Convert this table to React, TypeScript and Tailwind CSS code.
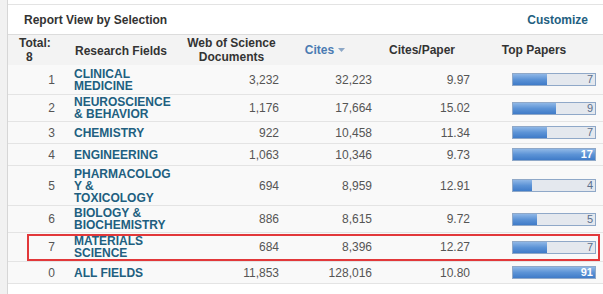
import React from 'react';

type Row = { n: number; lines: string[]; docs: string; cites: string; cpp: string; top: number; highlight?: boolean; h?: string };

const rows: Row[] = [
  { n: 1, lines: ['CLINICAL', 'MEDICINE'], docs: '3,232', cites: '32,223', cpp: '9.97', top: 7, h: 'h-[30px]' },
  { n: 2, lines: ['NEUROSCIENCE', '& BEHAVIOR'], docs: '1,176', cites: '17,664', cpp: '15.02', top: 9, h: 'h-[27px]' },
  { n: 3, lines: ['CHEMISTRY'], docs: '922', cites: '10,458', cpp: '11.34', top: 7, h: 'h-[22px]' },
  { n: 4, lines: ['ENGINEERING'], docs: '1,063', cites: '10,346', cpp: '9.73', top: 17, h: 'h-[22px]' },
  { n: 5, lines: ['PHARMACOLOG', 'Y &', 'TOXICOLOGY'], docs: '694', cites: '8,959', cpp: '12.91', top: 4, h: 'h-[40px]' },
  { n: 6, lines: ['BIOLOGY &', 'BIOCHEMISTRY'], docs: '886', cites: '8,615', cpp: '9.72', top: 5, h: 'h-[27px]' },
  { n: 7, lines: ['MATERIALS', 'SCIENCE'], docs: '684', cites: '8,396', cpp: '12.27', top: 7, highlight: true, h: 'h-[29px]' },
  { n: 0, lines: ['ALL FIELDS'], docs: '11,853', cites: '128,016', cpp: '10.80', top: 91, h: 'h-[22px]' },
];

const MAX = 17;

const Bar = ({ value }: { value: number }) => {
  const pct = Math.min(1, value / MAX) * 100;
  const full = pct >= 100;
  return (
    <div className="relative w-[84px] h-[13px] border border-[#8fa8c8] bg-[#e4e8ee]">
      <div
        className="absolute left-0 top-0 bottom-0 bg-gradient-to-b from-[#8fb7e6] via-[#5c93d6] to-[#3f7bc8]"
        style={{ width: `${pct}%` }}
      />
      <span className={`absolute right-[2px] top-0 text-[11px] leading-[11px] ${full ? 'text-white font-bold' : 'text-[#5b6f8c]'}`}>
        {value}
      </span>
    </div>
  );
};

const cols = 'grid grid-cols-[56px_120px_103px_93px_98px_1fr]';

export default function App() {
  return (
    <div className="flex w-[603px] h-[294px] bg-white text-[12px] text-[#555] overflow-hidden" style={{ fontFamily: '"Liberation Sans", Arial, sans-serif' }}>
      <div className="w-[8px] shrink-0 bg-[#f1f1f1] border-r border-[#d6d6d6]" />
      <div className="flex-1 mt-[4px] border-t border-[#e3e3e3]">
        {/* title bar */}
        <div className="h-[30px] flex items-center justify-between pl-[16px] pr-[15px] pt-[1px] border-b border-[#dcdcdc]">
          <span className="font-bold text-[#333]">Report View by Selection</span>
          <span className="font-bold text-[#23607f]">Customize</span>
        </div>

        {/* header */}
        <div className={`${cols} h-[30px] bg-[#f3f3f3] font-bold text-[#333] leading-[14px]`}>
          <div className="flex flex-col justify-center pl-[11px]">
            <span>Total:</span>
            <span className="pl-[7px]">8</span>
          </div>
          <div className="flex items-center pl-[11px] pt-[2px]">Research Fields</div>
          <div className="flex flex-col justify-center items-center pr-[8px]">
            <span>Web of Science</span>
            <span>Documents</span>
          </div>
          <div className="flex items-center justify-center pr-[17px] text-[#4a7bb2]">
            Cites
            <svg width="7" height="4" viewBox="0 0 7 4" className="ml-[4px]">
              <path d="M0 0 L7 0 L3.5 4 Z" fill="#8ca7c6" />
            </svg>
          </div>
          <div className="flex items-center justify-center pr-[14px]">Cites/Paper</div>
          <div className="flex items-center justify-center pr-[13px]">Top Papers</div>
        </div>

        {/* rows */}
        {rows.map((r) => (
          <div key={r.n} className={`${cols} relative bg-[#f9f9f9] border-b border-[#e4e4e4] ${r.h ?? ''}`}>
            {r.highlight && (
              <div className="absolute left-[19px] right-[3px] top-[1px] bottom-0 border-2 border-[#e2383a] pointer-events-none" />
            )}
            <div className="flex items-center justify-end pr-[9px]">{r.n}</div>
            <div className="flex flex-col justify-center pl-[10px] font-bold text-[#215f80] leading-[12px] whitespace-nowrap">
              {r.lines.map((l) => (
                <span key={l}>{l}</span>
              ))}
            </div>
            <div className="flex items-center justify-end pr-[8px]">{r.docs}</div>
            <div className="flex items-center justify-end pr-[8px]">{r.cites}</div>
            <div className="flex items-center justify-end pr-[8px]">{r.cpp}</div>
            <div className="flex items-center justify-end pr-[7px]">
              <Bar value={r.top} />
            </div>
          </div>
        ))}
      </div>
    </div>
  );
}
